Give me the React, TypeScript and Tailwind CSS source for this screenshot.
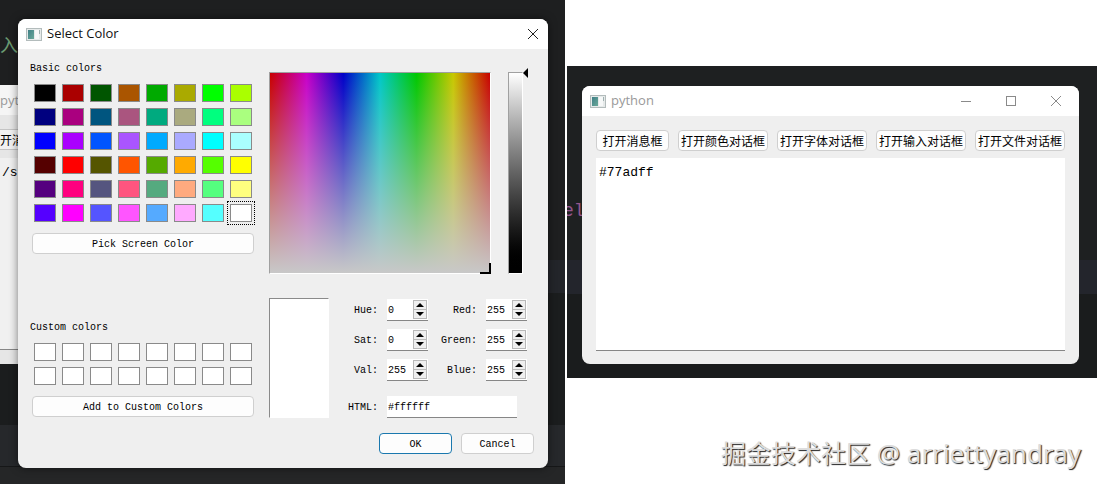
import React, { useState } from 'react';

const BASIC_COLORS = [
  '#000000', '#aa0000', '#005500', '#aa5500', '#00aa00', '#aaaa00', '#00ff00', '#aaff00',
  '#00007f', '#aa007f', '#00557f', '#aa557f', '#00aa7f', '#aaaa7f', '#00ff7f', '#aaff7f',
  '#0000ff', '#aa00ff', '#0055ff', '#aa55ff', '#00aaff', '#aaaaff', '#00ffff', '#aaffff',
  '#550000', '#ff0000', '#555500', '#ff5500', '#55aa00', '#ffaa00', '#55ff00', '#ffff00',
  '#55007f', '#ff007f', '#55557f', '#ff557f', '#55aa7f', '#ffaa7f', '#55ff7f', '#ffff7f',
  '#5500ff', '#ff00ff', '#5555ff', '#ff55ff', '#55aaff', '#ffaaff', '#55ffff', '#ffffff',
];

const CHANNELS = [
  { name: 'Hue', value: '0' },
  { name: 'Red', value: '255' },
  { name: 'Sat', value: '0' },
  { name: 'Green', value: '255' },
  { name: 'Val', value: '255' },
  { name: 'Blue', value: '255' },
];

const ACTIONS = ['打开消息框', '打开颜色对话框', '打开字体对话框', '打开输入对话框', '打开文件对话框'];

const AppIcon: React.FC = () => (
  <svg viewBox="0 0 16 13" className="h-[13px] w-4 shrink-0" aria-hidden="true">
    <defs>
      <linearGradient id="pane" x1="0" y1="0" x2="1" y2="1">
        <stop offset="0" stopColor="#3f7f86" />
        <stop offset="1" stopColor="#6aa99a" />
      </linearGradient>
    </defs>
    <rect x="0.5" y="0.5" width="15" height="12" fill="#e6eaea" stroke="#b3bcbc" />
    <rect x="2" y="2" width="6" height="9" fill="url(#pane)" />
    <rect x="9" y="2" width="4" height="9" fill="#f6f8f8" />
    <path d="M13.5 2v4" stroke="#9fb0b0" fill="none" />
  </svg>
);

const CloseIcon: React.FC = () => (
  <svg viewBox="0 0 12 12" className="size-3" fill="none" stroke="currentColor" aria-hidden="true">
    <path d="M1 1l10 10M11 1L1 11" />
  </svg>
);

interface PushButtonProps {
  children: React.ReactNode;
  className?: string;
  primary?: boolean;
}

const PushButton: React.FC<PushButtonProps> = ({ children, className = '', primary = false }) => (
  <button
    type="button"
    className={`flex h-[21px] items-center justify-center whitespace-nowrap rounded border bg-[#fdfdfd] ${
      primary ? 'border-[#1a78ae]' : 'border-[#cfcfcf]'
    } ${className}`}
  >
    {children}
  </button>
);

const SpinBox: React.FC<{ name: string; initial: string }> = ({ name, initial }) => {
  const [value, setValue] = useState(initial);
  const id = `channel-${name.toLowerCase()}`;
  const step = (delta: number) =>
    setValue((v) => String(Math.min(255, Math.max(0, (Number(v) || 0) + delta))));

  return (
    <>
      <label htmlFor={id} className="pt-0.5 text-right">{name}:</label>
      <div className="flex h-[22px] border-b border-[#868686] bg-white">
        <input
          id={id}
          value={value}
          onChange={(e) => setValue(e.target.value)}
          className="w-0 flex-1 pt-0.5 pl-px outline-none"
        />
        <div className="mt-px mr-px flex h-[19px] w-[14px] flex-col divide-y divide-[#b8b8b8] border border-[#b8b8b8] bg-[#efefef]">
          <button type="button" aria-label={`Increase ${name}`} onClick={() => step(1)} className="flex flex-1 items-center justify-center">
            <svg viewBox="0 0 8 4" className="h-1 w-2" aria-hidden="true"><path d="M4 0l4 4H0z" /></svg>
          </button>
          <button type="button" aria-label={`Decrease ${name}`} onClick={() => step(-1)} className="flex flex-1 items-center justify-center">
            <svg viewBox="0 0 8 4" className="h-1 w-2" aria-hidden="true"><path d="M0 0h8L4 4z" /></svg>
          </button>
        </div>
      </div>
    </>
  );
};

const ColorDialog: React.FC = () => {
  const [selected, setSelected] = useState(BASIC_COLORS.length - 1);
  const [html, setHtml] = useState('#ffffff');

  return (
    <section className="relative overflow-hidden rounded-lg bg-[#efefef] shadow-[0_0_8px_rgba(0,0,0,0.5)]">
      <header className="flex h-[30px] items-center gap-[5px] bg-white pr-[9px] pl-2">
        <AppIcon />
        <h2 className="flex-1 font-['Open_Sans','Noto_Sans',sans-serif] text-[13px] text-[#111]">Select Color</h2>
        <button type="button" aria-label="Close" className="text-[#222]"><CloseIcon /></button>
      </header>

      <div className="flex gap-[15px] pr-3.5 pb-3.5 pl-3 font-['Liberation_Mono',monospace] text-[10px] leading-4 text-black">
        {/* Swatches */}
        <div className="w-56 shrink-0 pt-3">
          <h3>Basic colors</h3>
          <div className="mt-[7px] grid grid-cols-8 gap-1.5 pr-0.5 pl-1">
            {BASIC_COLORS.map((color, i) => (
              <button
                key={color}
                type="button"
                aria-label={color}
                onClick={() => setSelected(i)}
                className={`h-[18px] border border-[#8a8a8a] ${
                  i === selected ? 'outline-1 outline-offset-2 outline-dotted outline-black' : ''
                }`}
                style={{ backgroundColor: color }}
              />
            ))}
          </div>
          <div className="mt-[11px] pl-0.5">
            <PushButton className="w-full pt-0.5">Pick Screen Color</PushButton>
          </div>

          <h3 className="mt-[66px]">Custom colors</h3>
          <div className="mt-[7px] grid grid-cols-8 gap-1.5 pr-0.5 pl-1">
            {Array.from({ length: 16 }, (_, i) => (
              <button key={i} type="button" aria-label={`Custom color ${i + 1}`} className="h-[18px] border border-[#8a8a8a] bg-white" />
            ))}
          </div>
          <div className="mt-[11px] pl-0.5">
            <PushButton className="w-full pt-0.5">Add to Custom Colors</PushButton>
          </div>
        </div>

        {/* Picker and channel values */}
        <div className="min-w-0 flex-1 pt-[23px]">
          <div className="flex h-[202px] pr-1.5">
            <div className="relative flex-1 border border-t-[#a0a0a0] border-r-white border-b-white border-l-[#a0a0a0] bg-[linear-gradient(to_bottom,transparent,#c8c8c8),linear-gradient(to_right,#c80000,#c800c8,#0000c8,#00c8c8,#00c800,#c8c800,#c80000)]">
              <span className="absolute -right-px -bottom-px size-[11px] border-r-2 border-b-2 border-black" />
            </div>
            <div className="ml-[17px] w-[15px] border border-t-[#a0a0a0] border-r-white border-b-white border-l-[#a0a0a0] bg-linear-to-b from-white to-black" />
            <svg viewBox="0 0 5 10" className="-mt-1 h-2.5 w-[5px]" aria-hidden="true"><path d="M5 0v10L0 5z" /></svg>
          </div>

          <div className="mt-6 flex">
            <div className="h-[120px] w-[60px] shrink-0 border border-t-[#8a8a8a] border-r-white border-b-white border-l-[#8a8a8a] bg-white" />
            <div className="grid grid-cols-[49px_41px_40px_41px] content-start items-center gap-x-[9px] gap-y-2 pt-px">
              {CHANNELS.map((channel) => (
                <SpinBox key={channel.name} name={channel.name} initial={channel.value} />
              ))}
              <label htmlFor="html" className="mt-[7px] pt-0.5 text-right">HTML:</label>
              <input
                id="html"
                value={html}
                onChange={(e) => setHtml(e.target.value)}
                className="col-span-3 mt-[7px] mr-2.5 h-[22px] min-w-0 border-b border-[#868686] bg-white pt-0.5 pl-px outline-none"
              />
            </div>
          </div>

          <div className="mt-[15px] flex justify-end gap-[9px]">
            <PushButton primary className="w-[73px] pt-0.5">OK</PushButton>
            <PushButton className="w-[73px] pt-0.5">Cancel</PushButton>
          </div>
        </div>
      </div>
    </section>
  );
};

const MainWindow: React.FC = () => (
  <section className="relative overflow-hidden rounded-lg bg-[#efefef]">
    <header className="flex h-[30px] items-center gap-[5px] bg-white px-2 text-[#8a8a8a]">
      <AppIcon />
      <h2 className="flex-1 font-['Open_Sans','Noto_Sans',sans-serif] text-[13px] text-[#999]">python</h2>
      <div className="mr-[9px] flex gap-[33px]">
        <button type="button" aria-label="Minimize">
          <svg viewBox="0 0 12 12" className="size-3" stroke="currentColor" aria-hidden="true"><path d="M1 6.5h10" /></svg>
        </button>
        <button type="button" aria-label="Maximize">
          <svg viewBox="0 0 12 12" className="size-3" fill="none" stroke="currentColor" aria-hidden="true"><rect x="1.5" y="1.5" width="9" height="9" /></svg>
        </button>
        <button type="button" aria-label="Close"><CloseIcon /></button>
      </div>
    </header>
    <div className="p-3.5 pb-[13px]">
      <div className="grid grid-cols-[73fr_90fr_90fr_90fr_90fr] gap-[9px] font-['Noto_Sans_CJK_SC',sans-serif] text-xs">
        {ACTIONS.map((label) => (
          <PushButton key={label}>{label}</PushButton>
        ))}
      </div>
      <textarea
        aria-label="Output"
        defaultValue="#77adff"
        className="mt-[7px] block h-[193px] w-full resize-none border-b border-[#868686] bg-white px-[3px] pt-[5px] font-['Liberation_Mono',monospace] text-[13px] leading-5 outline-none"
      />
    </div>
  </section>
);

// Strip of the window that stays visible to the left of the dialog
const WindowBehind: React.FC = () => (
  <div className="absolute top-[85px] left-0 w-12 overflow-hidden bg-[#e6e6e6] pb-3.5" aria-hidden="true">
    <div className="h-[30px] bg-[#f5f5f5] font-['Open_Sans','Noto_Sans',sans-serif] text-[13px] leading-[30px] text-[#999]">python</div>
    <div className="mt-3.5 h-[21px] border-y border-[#c4c4c4] bg-[#f2f2f2] font-['Noto_Sans_CJK_SC',sans-serif] text-xs leading-5 whitespace-nowrap">开消息</div>
    <div className="mt-2 h-[192px] border-b border-[#868686] bg-[#f0f0f0] pt-[5px] pl-0.5 font-['Liberation_Mono',monospace] text-[13px] leading-5">/s</div>
  </div>
);

const App: React.FC = () => (
  <main className="grid grid-cols-[565fr_530fr] gap-0.5 bg-white">
    <div className="relative overflow-hidden bg-[linear-gradient(to_bottom,#1e1f20_260px,#23252a_260px,#23252a_293px,#1b1d1e_293px,#1b1d1e_425px,#26282b_425px,#26282b_466px,#161718_466px,#161718_467px,#252627_467px)] pt-[19px] pr-[17px] pb-4 pl-[18px]">
      <span className="absolute top-[34px] left-0 font-['Noto_Sans_CJK_SC',sans-serif] text-lg leading-5 text-[#6a9a72]">入</span>
      <WindowBehind />
      <ColorDialog />
    </div>

    <div className="flex flex-col pt-[66px]">
      <div className="relative overflow-hidden bg-[linear-gradient(to_bottom,#1e2021_194px,#23252c_194px,#23252c_228px,#1a1c1d_228px)] pt-5 pr-[18px] pb-3.5 pl-[15px]">
        <span className="absolute top-[133px] -left-1 font-['Liberation_Mono',monospace] text-lg leading-6 text-[#94558d]">el</span>
        <MainWindow />
      </div>
      <p className="mt-[56px] pr-4 text-right font-['Noto_Sans_CJK_SC',sans-serif] text-[25px] leading-9 whitespace-nowrap text-[#dcdcdc] [text-shadow:1px_1px_1px_#222]">
        掘金技术社区 <span className="font-['Noto_Sans',sans-serif] text-[26px]">@ arriettyandray</span>
      </p>
    </div>
  </main>
);

export default App;
